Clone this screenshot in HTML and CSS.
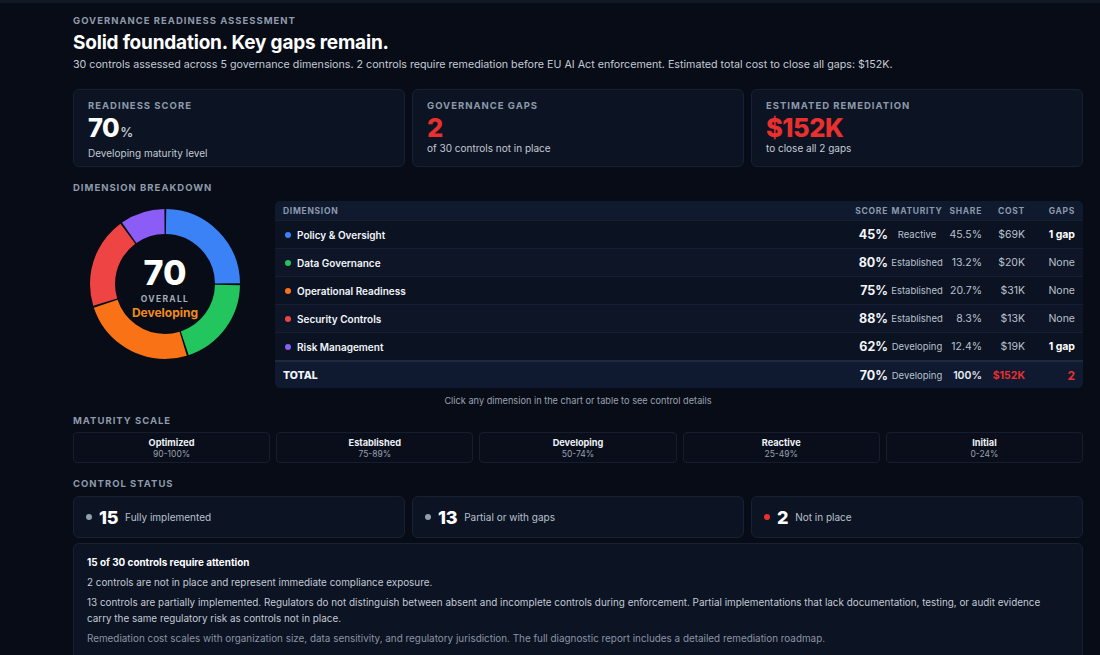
FILE: index.html
```html
<!DOCTYPE html>
<html lang="en">
<head>
<meta charset="utf-8">
<title>Governance Readiness Assessment</title>
<link rel="stylesheet" href="styles.css">
</head>
<body>
<div class="topline"></div>
<main class="page">
  <div class="eyebrow">GOVERNANCE READINESS ASSESSMENT</div>
  <h1 class="title">Solid foundation. Key gaps remain.</h1>
  <p class="subtitle">30 controls assessed across 5 governance dimensions. 2 controls require remediation before EU AI Act enforcement. Estimated total cost to close all gaps: $152K.</p>

  <section class="kpis">
    <div class="card kpi">
      <div class="label">READINESS SCORE</div>
      <div class="kpi-value">70<span class="pct">%</span></div>
      <div class="kpi-sub">Developing maturity level</div>
    </div>
    <div class="card kpi">
      <div class="label">GOVERNANCE GAPS</div>
      <div class="kpi-value red">2</div>
      <div class="kpi-sub">of 30 controls not in place</div>
    </div>
    <div class="card kpi">
      <div class="label">ESTIMATED REMEDIATION</div>
      <div class="kpi-value red">$152K</div>
      <div class="kpi-sub">to close all 2 gaps</div>
    </div>
  </section>

  <div class="label section">DIMENSION BREAKDOWN</div>
  <section class="breakdown">
    <div class="donut-wrap">
      <svg class="donut" width="152" height="152" viewBox="0 0 152 152">
        <g transform="rotate(-90 76 76)" fill="none" stroke-width="25">
          <circle cx="76" cy="76" r="62.5" stroke="#3b82f6" pathLength="360" stroke-dasharray="88.5 271.5" stroke-dashoffset="-1"></circle>
          <circle cx="76" cy="76" r="62.5" stroke="#22c55e" pathLength="360" stroke-dasharray="70.5 289.5" stroke-dashoffset="-91"></circle>
          <circle cx="76" cy="76" r="62.5" stroke="#f97316" pathLength="360" stroke-dasharray="88.5 271.5" stroke-dashoffset="-163"></circle>
          <circle cx="76" cy="76" r="62.5" stroke="#ef4444" pathLength="360" stroke-dasharray="70.5 289.5" stroke-dashoffset="-253"></circle>
          <circle cx="76" cy="76" r="62.5" stroke="#8b5cf6" pathLength="360" stroke-dasharray="34.5 325.5" stroke-dashoffset="-325"></circle>
        </g>
      </svg>
      <div class="donut-center">
        <div class="donut-num">70</div>
        <div class="donut-label">OVERALL</div>
        <div class="donut-level">Developing</div>
      </div>
    </div>

    <div class="table">
      <div class="row head">
        <div class="c-dim">DIMENSION</div>
        <div class="c-score">SCORE</div>
        <div class="c-mat">MATURITY</div>
        <div class="c-share">SHARE</div>
        <div class="c-cost">COST</div>
        <div class="c-gaps">GAPS</div>
      </div>
      <div class="row">
        <div class="c-dim"><span class="dot blue"></span>Policy &amp; Oversight</div>
        <div class="c-score">45%</div>
        <div class="c-mat">Reactive</div>
        <div class="c-share">45.5%</div>
        <div class="c-cost">$69K</div>
        <div class="c-gaps strong">1 gap</div>
      </div>
      <div class="row">
        <div class="c-dim"><span class="dot green"></span>Data Governance</div>
        <div class="c-score">80%</div>
        <div class="c-mat">Established</div>
        <div class="c-share">13.2%</div>
        <div class="c-cost">$20K</div>
        <div class="c-gaps">None</div>
      </div>
      <div class="row">
        <div class="c-dim"><span class="dot orange"></span>Operational Readiness</div>
        <div class="c-score">75%</div>
        <div class="c-mat">Established</div>
        <div class="c-share">20.7%</div>
        <div class="c-cost">$31K</div>
        <div class="c-gaps">None</div>
      </div>
      <div class="row">
        <div class="c-dim"><span class="dot redd"></span>Security Controls</div>
        <div class="c-score">88%</div>
        <div class="c-mat">Established</div>
        <div class="c-share">8.3%</div>
        <div class="c-cost">$13K</div>
        <div class="c-gaps">None</div>
      </div>
      <div class="row">
        <div class="c-dim"><span class="dot purple"></span>Risk Management</div>
        <div class="c-score">62%</div>
        <div class="c-mat">Developing</div>
        <div class="c-share">12.4%</div>
        <div class="c-cost">$19K</div>
        <div class="c-gaps strong">1 gap</div>
      </div>
      <div class="row total">
        <div class="c-dim">TOTAL</div>
        <div class="c-score">70%</div>
        <div class="c-mat">Developing</div>
        <div class="c-share">100%</div>
        <div class="c-cost red">$152K</div>
        <div class="c-gaps red">2</div>
      </div>
    </div>
  </section>
  <p class="hint">Click any dimension in the chart or table to see control details</p>

  <div class="label section2">MATURITY SCALE</div>
  <section class="scale">
    <div class="scale-box"><div class="s-name">Optimized</div><div class="s-range">90-100%</div></div>
    <div class="scale-box"><div class="s-name">Established</div><div class="s-range">75-89%</div></div>
    <div class="scale-box"><div class="s-name">Developing</div><div class="s-range">50-74%</div></div>
    <div class="scale-box"><div class="s-name">Reactive</div><div class="s-range">25-49%</div></div>
    <div class="scale-box"><div class="s-name">Initial</div><div class="s-range">0-24%</div></div>
  </section>

  <div class="label section">CONTROL STATUS</div>
  <section class="status">
    <div class="card stat"><span class="sdot"></span><span class="snum">15</span><span class="stext">Fully implemented</span></div>
    <div class="card stat"><span class="sdot"></span><span class="snum">13</span><span class="stext">Partial or with gaps</span></div>
    <div class="card stat"><span class="sdot sred"></span><span class="snum">2</span><span class="stext">Not in place</span></div>
  </section>

  <section class="card attention">
    <h2 class="att-title">15 of 30 controls require attention</h2>
    <p>2 controls are not in place and represent immediate compliance exposure.</p>
    <p>13 controls are partially implemented. Regulators do not distinguish between absent and incomplete controls during enforcement. Partial implementations that lack documentation, testing, or audit evidence carry the same regulatory risk as controls not in place.</p>
    <p class="muted">Remediation cost scales with organization size, data sensitivity, and regulatory jurisdiction. The full diagnostic report includes a detailed remediation roadmap.</p>
  </section>
</main>
</body>
</html>
```

FILE: styles.css
```css
* { box-sizing: border-box; }
html, body { margin: 0; padding: 0; }
body {
  background: #080c16;
  color: #e6ebf2;
  font-family: Inter, "Noto Sans", "Liberation Sans", sans-serif;
  overflow: hidden;
}
.topline { height: 3px; background: #121826; }
.page {
  width: 1010px;
  margin-left: 73px;
  padding-top: 11px;
}
.eyebrow, .label {
  font-size: 9.5px;
  font-weight: 700;
  letter-spacing: 1px;
  color: #8d9aab;
  line-height: 14px;
}
.title {
  margin: 3px 0 0;
  font-size: 19px;
  font-weight: 700;
  line-height: 24px;
  color: #ffffff;
  letter-spacing: -0.2px;
}
.subtitle {
  margin: 2px 0 0;
  font-size: 10.7px;
  line-height: 16px;
  color: #c3cad5;
}
.card {
  background: #0c1322;
  border: 1px solid #182133;
  border-radius: 6px;
}
.kpis {
  margin-top: 16px;
  display: grid;
  grid-template-columns: repeat(3, 1fr);
  gap: 7px;
}
.kpi { height: 78px; padding: 9px 14px 0; }
.kpi-value {
  font-size: 25.5px;
  font-weight: 800;
  line-height: 27px;
  color: #ffffff;
  letter-spacing: -0.5px;
  margin-top: 1px;
}
.kpi-value .pct { font-size: 13px; font-weight: 600; color: #c3cad5; margin-left: 1px; letter-spacing: 0; }
.kpi-value.red, .red { color: #e8312f; }
.kpi-sub { font-size: 10px; line-height: 14px; color: #c3cad5; margin-top: 0; }

.section { margin-top: 14px; }
.section2 { margin-top: 6px; }

.breakdown {
  margin-top: 6px;
  display: grid;
  grid-template-columns: 184px 1fr;
  gap: 18px;
  align-items: start;
}
.donut-wrap {
  position: relative;
  width: 152px;
  height: 152px;
  margin: 7px auto 0;
}
.donut { display: block; }
.donut-center {
  position: absolute;
  inset: 0;
  display: flex;
  flex-direction: column;
  align-items: center;
  justify-content: center;
  padding-top: 6px;
}
.donut-num { font-size: 34px; font-weight: 800; line-height: 36px; color: #fff; }
.donut-label { font-size: 8.5px; font-weight: 700; letter-spacing: 1.3px; color: #a3adbb; margin-top: 3px; line-height: 11px; }
.donut-level { font-size: 12px; font-weight: 700; color: #f08b1d; line-height: 15px; }

.table {
  background: #0b1221;
  border-radius: 5px;
  overflow: hidden;
}
.row {
  display: grid;
  grid-template-columns: 1fr 40px 58px 36px 43px 50px;
  align-items: center;
  padding: 0 8px;
  height: 28px;
  border-top: 1px solid #172032;
  font-size: 10.5px;
  color: #b9c1cd;
}
.row:nth-child(odd) { background: #0d1527; }
.row.head {
  height: 19px;
  border-top: none;
  background: #101a2f;
  font-size: 8.5px;
  font-weight: 700;
  letter-spacing: 0.7px;
  color: #8b98ac;
}
.c-dim { display: flex; align-items: center; font-weight: 600; color: #f2f5f9; font-size: 10px; }
.head .c-dim { color: #8b98ac; font-weight: 700; font-size: 8.5px; }
.c-score { text-align: right; font-size: 12.5px; font-weight: 700; color: #f4f6fa; }
.head .c-score { font-size: 8.5px; color: #8b98ac; }
.c-mat { text-align: center; font-size: 9.5px; }
.head .c-mat { font-size: 8.5px; }
.c-share, .c-cost, .c-gaps { text-align: right; }
.c-gaps.strong { color: #fff; font-weight: 700; }
.dot { width: 6px; height: 6px; border-radius: 50%; margin: 0 6px 0 2px; flex: none; }
.dot.blue { background: #3b82f6; }
.dot.green { background: #22c55e; }
.dot.orange { background: #f97316; }
.dot.redd { background: #ef4444; }
.dot.purple { background: #8b5cf6; }
.row.total {
  background: #0f192f;
  border-top: 2px solid #1f2a3e;
}
.row.total .c-dim { font-weight: 800; font-size: 10.5px; }
.row.total .c-share { color: #e6ebf2; font-weight: 600; }
.row.total .c-cost.red, .row.total .c-gaps.red { color: #e8312f; font-weight: 700; }
.row.total .c-gaps.red { font-size: 12px; }

.hint {
  margin: 6px 0 0;
  text-align: center;
  font-size: 9.2px;
  line-height: 14px;
  color: #98a2b1;
}
.scale {
  margin-top: 4px;
  display: grid;
  grid-template-columns: repeat(5, 1fr);
  gap: 6px;
}
.scale-box {
  height: 31px;
  border: 1px solid #161e2d;
  border-radius: 4px;
  background: #090e1a;
  text-align: center;
  padding-top: 4px;
}
.s-name { font-size: 9.2px; font-weight: 700; color: #eef1f6; line-height: 12px; }
.s-range { font-size: 8.5px; color: #98a2b1; line-height: 11px; }

.status {
  margin-top: 5px;
  display: grid;
  grid-template-columns: repeat(3, 1fr);
  gap: 7px;
}
.stat {
  height: 42px;
  display: flex;
  align-items: center;
  padding-left: 12px;
}
.sdot { width: 6px; height: 6px; border-radius: 50%; background: #8fa0ad; margin-right: 7px; }
.sdot.sred { background: #e8312f; }
.snum { font-size: 18px; font-weight: 800; color: #fff; margin-right: 7px; letter-spacing: -0.3px; }
.stext { font-size: 10px; color: #b9c1cd; }

.attention {
  margin-top: 5px;
  padding: 10px 32px 12px 13px;
}
.att-title { margin: 0 0 4px; font-size: 9.9px; font-weight: 700; color: #fff; line-height: 16px; }
.attention p { margin: 0 0 4px; font-size: 9.9px; line-height: 16px; color: #c3cad5; }
.attention p.muted { color: #8b95a5; }
```
